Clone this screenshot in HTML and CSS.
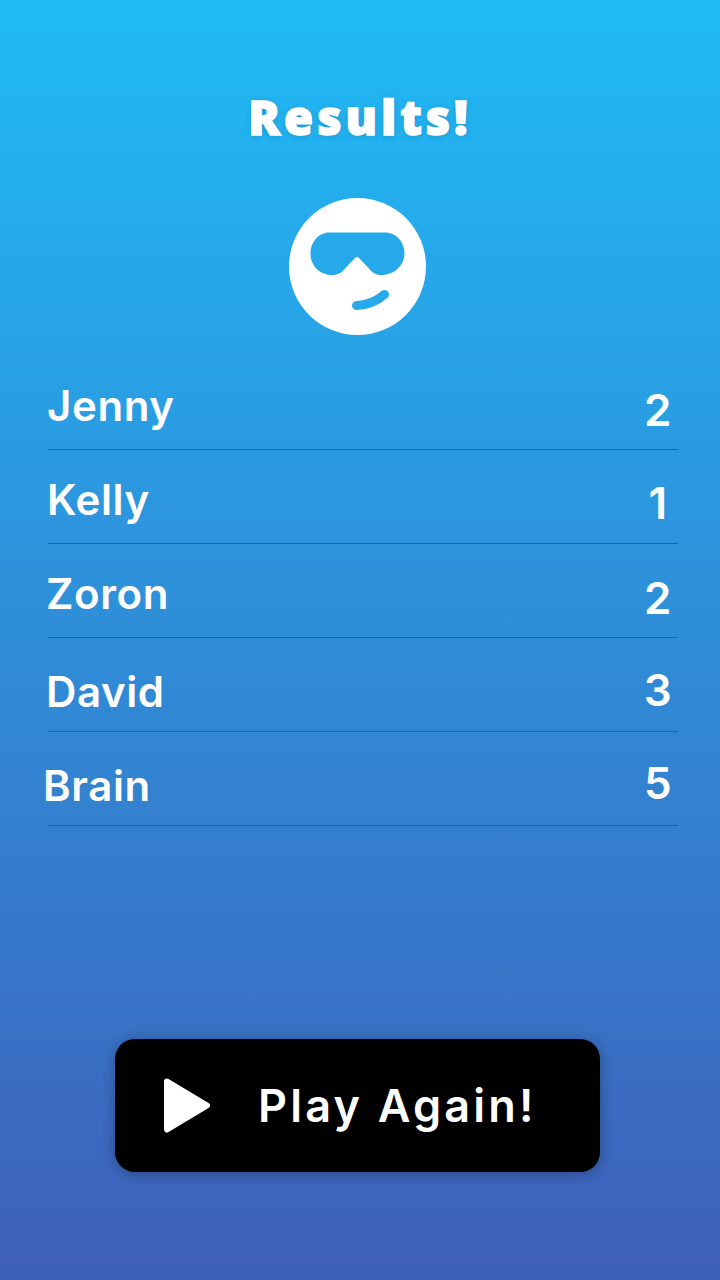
FILE: index.html
```html
<!DOCTYPE html>
<html lang="en">
<head>
    <meta charset="UTF-8">
    <meta name="viewport" content="width=device-width, initial-scale=1.0">
    <title>Results</title>
    <link rel="stylesheet" href="styles.css">
</head>
<body>
    <main class="screen">
        <h1 class="title">Results!</h1>

        <svg class="face" viewBox="0 0 137 137" aria-hidden="true">
            <circle cx="68.5" cy="68.5" r="68.5" fill="#fff"/>
            <path class="face-cut" d="M40 34.5H96C107 34.5 115.5 44 115.5 55C115.5 67 106 77 92 77C87 77 83 74.5 79.5 70L69.5 59.5Q68 58 66.5 59.5L56.5 70C53 74.5 49 77 43 77C30 77 21.5 67 21.5 55.5C21.5 44 30 34.5 40 34.5Z"/>
            <path class="face-smile" d="M67.5 107.5Q83 107 95.5 96.5"/>
        </svg>

        <ul class="scores">
            <li class="score-row">
                <span class="name name-jenny">Jenny</span>
                <span class="points points-low">2</span>
            </li>
            <li class="score-row">
                <span class="name name-kelly">Kelly</span>
                <span class="points points-one">1</span>
            </li>
            <li class="score-row">
                <span class="name name-zoron">Zoron</span>
                <span class="points points-low">2</span>
            </li>
            <li class="score-row">
                <span class="name name-david">David</span>
                <span class="points points-mid">3</span>
            </li>
            <li class="score-row">
                <span class="name name-brain">Brain</span>
                <span class="points points-high">5</span>
            </li>
        </ul>

        <button type="button" class="play-btn">
            <svg class="play-icon" viewBox="0 0 46 55" aria-hidden="true">
                <polygon points="3,3.5 43,27.5 3,51.5" fill="#fff" stroke="#fff" stroke-width="6" stroke-linejoin="round"/>
            </svg>
            <span class="play-label">Play Again!</span>
        </button>
    </main>
</body>
</html>
```

FILE: styles.css
```css
* {
    box-sizing: border-box;
}

body {
    margin: 0;
    font-family: 'Inter', 'Liberation Sans', sans-serif;
    color: #fff;
}

.screen {
    width: 720px;
    height: 1280px;
    padding-top: 89px;
    background: linear-gradient(180deg, #1fbbf6 0%, #3f5fb9 100%);
    display: flex;
    flex-direction: column;
    align-items: center;
    overflow: hidden;
}

.title {
    margin: 0;
    height: 56px;
    font-family: 'Open Sans', sans-serif;
    font-size: 47px;
    font-weight: 800;
    line-height: 56px;
    letter-spacing: 4px;
    -webkit-text-stroke: 1.5px #fff;
    text-shadow: 0 1px 6px rgba(0, 0, 0, 0.18);
}

.face {
    width: 137px;
    height: 137px;
    margin-top: 53px;
    margin-left: -5px;
}

.face-cut {
    fill: #26a9ea;
}

.face-smile {
    fill: none;
    stroke: #26a9ea;
    stroke-width: 9;
    stroke-linecap: round;
}

.scores {
    list-style: none;
    margin: 21px 0 0;
    padding: 0;
    width: 630px;
    margin-left: 6px;
}

.score-row {
    height: 94px;
    border-bottom: 1px solid #2060ad;
    display: flex;
    justify-content: space-between;
    align-items: flex-start;
}

.name {
    font-size: 42px;
    font-weight: 560;
    line-height: 48px;
    letter-spacing: 0.6px;
}

.name-jenny { margin-top: 26px; margin-left: -1px; }
.name-kelly { margin-top: 26px; margin-left: -1px; }
.name-zoron { margin-top: 26px; margin-left: -2px; }
.name-david { margin-top: 30px; margin-left: -2px; }
.name-brain { margin-top: 30px; margin-left: -5px; }

.points {
    width: 54px;
    margin-right: -7px;
    font-size: 44px;
    font-weight: 560;
    line-height: 52px;
    letter-spacing: 0.5px;
    text-align: center;
}

.points-low { margin-top: 28px; }
.points-one { margin-top: 27px; }
.points-mid { margin-top: 26px; }
.points-high { margin-top: 25px; }

.play-btn {
    width: 485px;
    height: 133px;
    margin-top: 213px;
    margin-left: -5px;
    padding: 0 0 0 49px;
    display: flex;
    align-items: center;
    background: #000;
    color: #fff;
    border: none;
    border-radius: 20px;
    box-shadow: 0 2px 14px rgba(0, 0, 0, 0.3);
    cursor: pointer;
}

.play-icon {
    width: 46px;
    height: 55px;
}

.play-label {
    margin-left: 48px;
    font-family: 'Inter', sans-serif;
    font-size: 45px;
    font-weight: 560;
    letter-spacing: 3.2px;
    line-height: 50px;
}
```
